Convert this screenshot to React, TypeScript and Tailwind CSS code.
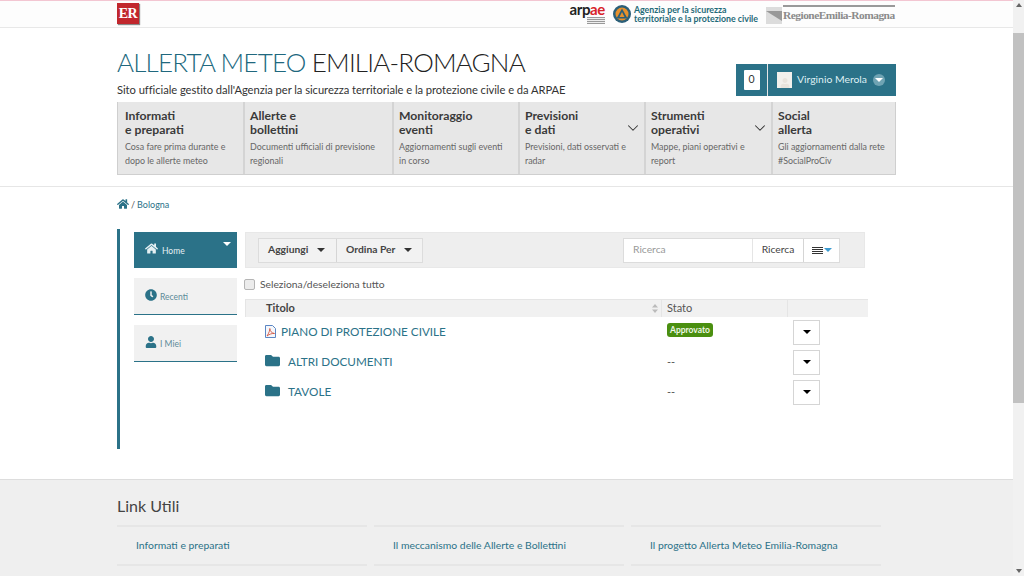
import { ChevronDown } from "lucide-react";
import { FaClock, FaFolder, FaHome, FaUser } from "react-icons/fa";

const TEAL = "text-[#2b7288]";

const NAV = [
  { w: "w-[125px]", a: "Informati", b: "e preparati", c: "Cosa fare prima durante e", d: "dopo le allerte meteo" },
  { w: "w-[149px]", a: "Allerte e", b: "bollettini", c: "Documenti ufficiali di previsione", d: "regionali" },
  { w: "w-[126px]", a: "Monitoraggio", b: "eventi", c: "Aggiornamenti sugli eventi", d: "in corso" },
  { w: "w-[126px]", a: "Previsioni", b: "e dati", c: "Previsioni, dati osservati e", d: "radar", more: true },
  { w: "w-[127px]", a: "Strumenti", b: "operativi", c: "Mappe, piani operativi e", d: "report", more: true },
  { w: "w-[124px]", a: "Social", b: "allerta", c: "Gli aggiornamenti dalla rete", d: "#SocialProCiv" },
];

const LINKS = [
  "Informati e preparati",
  "Il meccanismo delle Allerte e Bollettini",
  "Il progetto Allerta Meteo Emilia-Romagna",
];

function Caret({ className = "border-t-[#333]" }: { className?: string }) {
  return <span className={`inline-block h-0 w-0 border-x-[4px] border-t-[4px] border-x-transparent ${className}`} />;
}

function PdfIcon() {
  return (
    <svg width="11" height="13" viewBox="0 0 11 13" className="mr-[5px] shrink-0">
      <path d="M0.5 0.5 H7.5 L10.5 3.5 V12.5 H0.5 Z" fill="#f4f7fb" stroke="#5b86c4" />
      <path d="M2 11 C4 8 5 5 4.8 3.5 C5 6 6.5 8 9.5 8.5 C7 8.3 4.5 9 2 11 Z" fill="none" stroke="#d2553f" strokeWidth="0.9" />
    </svg>
  );
}

function TopBar() {
  return (
    <div className="flex h-[28px] shrink-0 items-center justify-between border-t border-b border-t-[#f3c6d2] border-b-[#e8e8e8] bg-[#fdfdfd] pr-[118px] pl-[117px]">
      <div className="mb-[1px] flex h-[21px] w-[22px] items-center justify-center bg-[#c1272d] font-['Liberation_Serif',serif] text-[14px] font-bold tracking-[-0.5px] text-white shadow-[1px_1px_1px_#888]">
        ER
      </div>
      <div className="flex items-center">
        <div className="mr-[8px] flex flex-col items-end">
          <span className="text-[15px] leading-[11px] font-bold tracking-[-0.4px] text-[#222]">
            arp<span className="text-[#d8232a]">ae</span>
          </span>
          <span className="mt-[2px] h-[7px] w-[18px] bg-[repeating-linear-gradient(#999_0,#999_1px,#eee_1px,#eee_2px)]" />
        </div>
        <svg width="18" height="18" viewBox="0 0 18 18" className="mr-[3px]">
          <circle cx="9" cy="9" r="9" fill="#2b5f78" />
          <circle cx="9" cy="9" r="6.5" fill="#e8912c" />
          <path d="M9 3.5 L14.5 13.5 H3.5 Z" fill="#2b5f78" />
          <path d="M9 7 L11.5 12 H6.5 Z" fill="#e8912c" />
        </svg>
        <div className="mr-[8px] text-[8.8px] leading-[9px] font-bold text-[#1f6a78]">
          Agenzia per la sicurezza
          <br />
          territoriale e la protezione civile
        </div>
        <svg width="16" height="17" viewBox="0 0 16 17" className="mt-[2px] shrink-0">
          <rect width="16" height="17" fill="#dcdcdc" />
          <path d="M0 4 H16 V14 Z" fill="#999" />
        </svg>
        <div className="ml-[1px] flex w-[112px] flex-col">
          <span className="h-[2px] w-[112px] bg-[#999]" />
          <span className="mt-[1px] font-['Liberation_Serif',serif] text-[11.4px] leading-[15px] font-bold tracking-[-0.5px] whitespace-nowrap text-[#8b8b8b]">
            RegioneEmilia-Romagna
          </span>
        </div>
      </div>
    </div>
  );
}

function Header() {
  return (
    <div className="shrink-0 border-b border-[#e6e6e6] pr-[117px] pb-[11px] pl-[117px]">
      <div className="flex items-start justify-between">
        <div>
          <h1 className="mt-[16px] text-[26px] leading-[36px] font-light tracking-[-0.8px] text-[#222]">
            <span className="text-[#20687e]">ALLERTA METEO</span> EMILIA-ROMAGNA
          </h1>
          <p className="mt-[1px] text-[11.2px] leading-[18px] tracking-[-0.05px] text-[#333]">
            Sito ufficiale gestito dall'Agenzia per la sicurezza territoriale e la protezione civile e da ARPAE
          </p>
        </div>
        <div className="mt-[36px] flex h-[32px] w-[160px] bg-[#2b7288] text-white">
          <div className="flex w-[32px] items-center justify-center border-r border-[#e6e6e6]">
            <span className="flex h-[20px] w-[16px] items-center justify-center rounded-[1px] bg-white text-[10.5px] text-[#333]">0</span>
          </div>
          <div className="flex flex-1 items-center pl-[9px]">
            <span className="flex h-[16px] w-[15px] items-end justify-center bg-[#f2f0ec]">
              <FaUser className="text-[10px] text-[#e8e3dc]" />
            </span>
            <span className="ml-[5px] text-[10.4px] text-[#dff0f4]">Virginio Merola</span>
            <span className="ml-[6px] flex h-[12px] w-[12px] items-center justify-center rounded-full bg-[#6fa3b3]">
              <Caret className="border-t-white" />
            </span>
          </div>
        </div>
      </div>
      <nav className="mt-[3px] flex h-[73px] border-r border-b border-l border-[#cfcfcf] bg-[#e7e7e7]">
        {NAV.map((n, i) => (
          <div key={n.a} className={`relative shrink-0 pt-[7px] ${n.w} ${i ? "border-l-2 border-[#d4d4d4] pl-[5px]" : "pl-[7px]"}`}>
            <div className="text-[12.2px] leading-[14px] font-bold text-[#3a3a3a]">
              {n.a}
              <br />
              {n.b}
            </div>
            <div className="mt-[3px] text-[8.9px] leading-[13.5px] whitespace-nowrap text-[#666]">
              {n.c}
              <br />
              {n.d}
            </div>
            {n.more && <ChevronDown className="absolute top-[17px] right-[2px] h-[18px] w-[18px] text-[#333]" strokeWidth={1.4} />}
          </div>
        ))}
      </nav>
    </div>
  );
}

function SideTab({ icon, label, active }: { icon: React.ReactNode; label: string; active?: boolean }) {
  if (active) {
    return (
      <div className="relative flex h-[36px] items-center bg-[#2b7288] pl-[11px] text-[8.5px] text-[#e5f0f3]">
        {icon}
        <span className="mt-[3px] ml-[4px]">{label}</span>
        <span className="absolute top-[10px] right-[6px] leading-[0]">
          <Caret className="border-t-white" />
        </span>
      </div>
    );
  }
  return (
    <div className="flex h-[37px] items-center border-b border-[#2b7288] bg-[#f1f1f1] pl-[11px] text-[8.5px] text-[#5d8b99]">
      {icon}
      <span className="mt-[2px] ml-[3px]">{label}</span>
    </div>
  );
}

function Row({ icon, label, state }: { icon: React.ReactNode; label: string; state: React.ReactNode }) {
  return (
    <div className="flex h-[30px] items-center">
      <div className="flex w-[422px] items-center pl-[20px]">
        {icon}
        <span className={`text-[11.7px] ${TEAL}`}>{label}</span>
      </div>
      <div className="w-[126px] text-[11px] text-[#555]">{state}</div>
      <button className="flex h-[25px] w-[27px] items-center justify-center border border-[#d5d5d5] bg-white">
        <Caret className="border-t-black" />
      </button>
    </div>
  );
}

function Content() {
  return (
    <div className="flex h-[257px] shrink-0 items-start pt-[7px] pl-[117px]">
      <div className="flex h-[220px] w-[123px] shrink-0 flex-col gap-[10px] border-l-[3px] border-[#2b7288] pt-[3px] pr-[3px] pl-[14px]">
        <SideTab active label="Home" icon={<FaHome className="-mt-[3px] text-[13px]" />} />
        <SideTab label="Recenti" icon={<FaClock className="-mt-[2px] text-[12px] text-[#2b7288]" />} />
        <SideTab label="I Miei" icon={<FaUser className="-mt-[2px] text-[12px] text-[#2b7288]" />} />
      </div>
      <div className="ml-[5px] w-[623px] pt-[3px]">
        <div className="flex h-[36px] w-[620px] items-center justify-between border border-[#e8e8e8] bg-[#eeeeee] pr-[24px] pl-[12px]">
          <div className="flex h-[25px] border border-[#dcdcdc] bg-[#f2f2f2] text-[10.3px] font-bold text-[#444]">
            <span className="flex w-[78px] items-center gap-[9px] border-r border-[#d5d5d5] pl-[9px]">
              Aggiungi <Caret />
            </span>
            <span className="flex w-[85px] items-center gap-[9px] pl-[9px]">
              Ordina Per <Caret />
            </span>
          </div>
          <div className="flex h-[25px] border border-[#dcdcdc] bg-white text-[10.3px]">
            <span className="flex w-[129px] items-center border-r border-[#e5e5e5] pl-[9px] text-[#999]">Ricerca</span>
            <span className="flex w-[51px] items-center justify-center border-r border-[#d5d5d5] text-[#444]">Ricerca</span>
            <span className="flex w-[35px] items-center justify-center gap-[1px]">
              <span className="h-[7px] w-[11px] bg-[repeating-linear-gradient(#333_0,#333_1px,#fff_1px,#fff_2px)]" />
              <Caret className="border-t-[#3d9bd1]" />
            </span>
          </div>
        </div>
        <label className="mt-[10px] -ml-[1px] flex h-[13px] items-center text-[10.3px] text-[#555]">
          <span className="h-[11px] w-[11px] rounded-[2px] border border-[#b5b5b5] bg-[#ececec]" />
          <span className="ml-[5px]">Seleziona/deseleziona tutto</span>
        </label>
        <div className="mt-[8px] flex h-[18px] items-center border-t border-[#e5e5e5] bg-[#f1f1f1] text-[11px]">
          <div className="relative flex h-full w-[416px] items-center border-l border-[#e5e5e5] pl-[20px] font-bold text-[#444]">
            Titolo
            <svg width="6" height="9" viewBox="0 0 6 9" className="absolute top-[4px] right-[3px]">
              <path d="M3 0 L6 3.5 H0 Z M3 9 L0 5.5 H6 Z" fill="#bbb" />
            </svg>
          </div>
          <div className="flex h-full w-[127px] items-center border-x border-[#e5e5e5] pl-[5px] text-[#555]">Stato</div>
        </div>
        <Row
          icon={<PdfIcon />}
          label="PIANO DI PROTEZIONE CIVILE"
          state={
            <span className="relative top-[-3px] rounded-[3px] bg-[#4a8f10] px-[3px] py-[2px] text-[8.5px] font-bold text-[#eef7e5]">
              Approvato
            </span>
          }
        />
        <Row icon={<FaFolder className="-mt-[3px] mr-[8px] text-[15px] text-[#2b7288]" />} label="ALTRI DOCUMENTI" state="--" />
        <Row icon={<FaFolder className="-mt-[3px] mr-[8px] text-[15px] text-[#2b7288]" />} label="TAVOLE" state="--" />
      </div>
    </div>
  );
}

function Footer() {
  return (
    <div className="flex-1 border-t border-[#dddddd] bg-[#efefef] pl-[117px]">
      <h3 className="mt-[16px] text-[16px] leading-[20px] text-[#444]">Link Utili</h3>
      <div className="mt-[9px] flex gap-[7px]">
        {LINKS.map((l) => (
          <div
            key={l}
            className={`flex h-[41px] w-[250px] items-center border-y-2 border-[#e6e6e6] pl-[19px] text-[10.4px] ${TEAL}`}
          >
            {l}
          </div>
        ))}
      </div>
    </div>
  );
}

function Scrollbar() {
  return (
    <div className="flex w-[11px] shrink-0 flex-col bg-[#f1f1f1]">
      <div className="flex h-[33px] items-start justify-center pt-[3px]">
        <span className="h-0 w-0 border-x-[3px] border-b-[4px] border-x-transparent border-b-[#666]" />
      </div>
      <div className="h-[370px] bg-[#c1c1c1]" />
      <div className="flex flex-1 items-end justify-center pb-[3px]">
        <span className="h-0 w-0 border-x-[3px] border-t-[4px] border-x-transparent border-t-[#666]" />
      </div>
    </div>
  );
}

export default function App() {
  return (
    <div className="flex h-[576px] w-[1024px] overflow-hidden bg-white font-['Lato',sans-serif]">
      <div className="flex min-w-0 flex-1 flex-col">
        <TopBar />
        <Header />
        <div className={`flex h-[35px] shrink-0 items-center pl-[117px] text-[9px] ${TEAL}`}>
          <FaHome className="-mt-[2px] text-[12px]" />
          <span className="mx-[2px] text-[#555]">/</span>
          <span>Bologna</span>
        </div>
        <Content />
        <Footer />
      </div>
      <Scrollbar />
    </div>
  );
}
